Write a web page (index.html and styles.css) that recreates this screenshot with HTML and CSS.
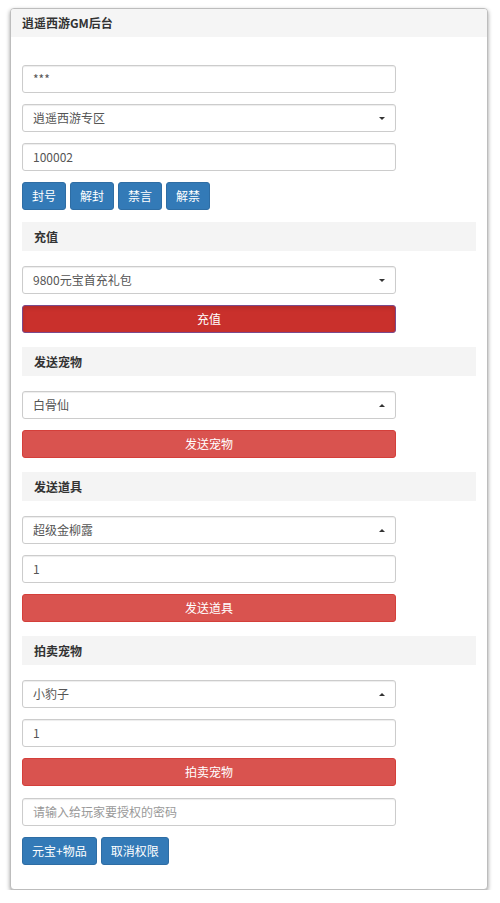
FILE: index.html
```html
<!DOCTYPE html>
<html lang="zh-CN">
<head>
<meta charset="utf-8">
<title>逍遥西游GM后台</title>
<link rel="stylesheet" href="styles.css">
</head>
<body>
<div class="panel">
  <div class="panel-head">逍遥西游GM后台</div>
  <div class="panel-body">
    <div class="field">***</div>
    <div class="field select"><span>逍遥西游专区</span><i class="arrow down"></i></div>
    <div class="field">100002</div>
    <div class="btn-row">
      <span class="btn blue">封号</span>
      <span class="btn blue">解封</span>
      <span class="btn blue">禁言</span>
      <span class="btn blue">解禁</span>
    </div>

    <div class="section">充值</div>
    <div class="field select"><span>9800元宝首充礼包</span><i class="arrow down"></i></div>
    <div class="btn red wide active">充值</div>

    <div class="section">发送宠物</div>
    <div class="field select"><span>白骨仙</span><i class="arrow up"></i></div>
    <div class="btn red wide">发送宠物</div>

    <div class="section">发送道具</div>
    <div class="field select"><span>超级金柳露</span><i class="arrow up"></i></div>
    <div class="field">1</div>
    <div class="btn red wide">发送道具</div>

    <div class="section">拍卖宠物</div>
    <div class="field select"><span>小豹子</span><i class="arrow up"></i></div>
    <div class="field">1</div>
    <div class="btn red wide tight">拍卖宠物</div>

    <div class="field placeholder">请输入给玩家要授权的密码</div>
    <div class="btn-row last">
      <span class="btn blue">元宝+物品</span>
      <span class="btn blue">取消权限</span>
    </div>
  </div>
</div>
</body>
</html>
```

FILE: styles.css
```css
* { box-sizing: border-box; }
html, body { margin: 0; padding: 0; background: #fff; }
body {
  font-family: "Noto Sans CJK SC", "Noto Sans", "Liberation Sans", sans-serif;
  font-size: 12px;
  color: #333;
}
.panel {
  margin: 8px 0 0 10px;
  width: 478px;
  border: 1px solid #bdbdbd;
  border-radius: 4px;
  box-shadow: 0 2px 4px rgba(0,0,0,0.4);
  background: #fff;
}
.panel-head {
  height: 28px;
  line-height: 28px;
  background: #f5f5f5;
  padding-left: 11px;
  font-weight: bold;
  border-radius: 3px 3px 0 0;
}
.panel-body {
  padding: 28px 11px 24px;
}
.field {
  width: 374px;
  height: 28px;
  line-height: 26px;
  border: 1px solid #ccc;
  border-radius: 3px;
  padding: 0 10px;
  color: #555;
  margin-bottom: 11px;
  box-shadow: inset 0 1px 1px rgba(0,0,0,0.075);
  display: flex;
  align-items: center;
  justify-content: space-between;
}
.placeholder { color: #999; }
.arrow {
  width: 0; height: 0;
  border-left: 3px solid transparent;
  border-right: 3px solid transparent;
}
.arrow.down { border-top: 3px solid #333; }
.arrow.up { border-bottom: 3px solid #333; }
.btn-row {
  display: flex;
  gap: 4px;
  margin-bottom: 12px;
}
.btn-row.last { margin-bottom: 0; }
.btn {
  display: block;
  height: 28px;
  line-height: 26px;
  padding: 0 9px;
  border: 1px solid transparent;
  border-radius: 3px;
  color: #fff;
  text-align: center;
}
.blue { background: #337ab7; border-color: #2e6da4; }
.red { background: #d9534f; border-color: #d43f3a; }
.wide { width: 374px; margin-bottom: 14px; }
.wide.tight { margin-bottom: 12px; }
.red.active {
  background: #c9302c;
  border-color: #7a4a8c;
  box-shadow: inset 0 2px 4px rgba(0,0,0,0.12);
}
.section {
  height: 29px;
  line-height: 29px;
  background: #f4f4f4;
  padding-left: 12px;
  font-weight: bold;
  margin: 0 0 15px;
}
```
